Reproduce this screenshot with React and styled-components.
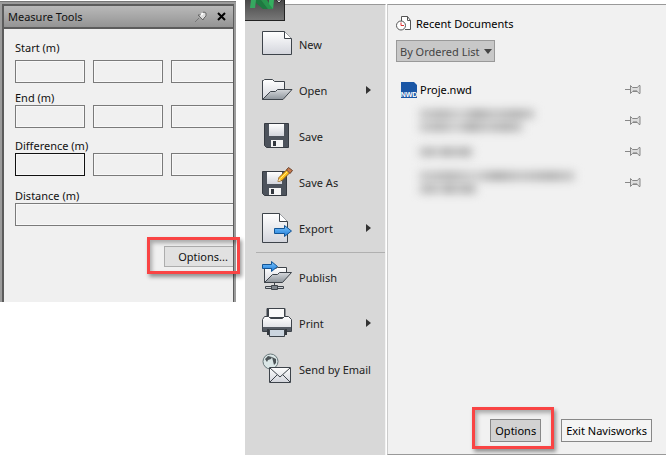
import React from "react";
import styled, { createGlobalStyle, css } from "styled-components";

const GlobalStyle = createGlobalStyle`
  * {
    box-sizing: border-box;
  }
  body {
    margin: 0;
    background: #fff;
    color: #111;
    font-family: "Noto Sans", "Open Sans", sans-serif;
    font-size: 11px;
  }
  button, input, select {
    font: inherit;
    color: inherit;
    border-radius: 0;
    margin: 0;
  }
`;

const Page = styled.main`
  display: grid;
  grid-template-columns: minmax(0, 236fr) minmax(0, 421fr);
  gap: 9px;
  align-items: start;
`;

/* Measure tools */

const ToolWindow = styled.section`
  position: relative;
  margin-top: 1px;
  padding: 2px 2px 0;
  background: #9c9c9c;
  border-top: 1px solid #777;
`;

const ToolFrame = styled.div`
  border: 2px solid #5c5c5c;
  border-right-width: 1px;
  border-bottom: 0;
  background: #f0f0f0;
`;

const TitleBar = styled.header`
  display: flex;
  align-items: center;
  height: 23px;
  padding: 0 7px 0 4px;
  border-bottom: 2px solid #5c5c5c;
  background: linear-gradient(#b9b9b9, #949494);
`;

const Title = styled.h1`
  flex: 1;
  margin: 0;
  font-size: 11px;
  font-weight: normal;
`;

const IconButton = styled.button`
  display: flex;
  align-items: center;
  justify-content: center;
  padding: 0;
  border: 0;
  background: none;
`;

const TitleButtons = styled.div`
  display: flex;
  gap: 10px;
`;

const Form = styled.form`
  display: flex;
  flex-direction: column;
  padding: 11px 0 35px 11px;
  overflow: hidden;
`;

const Group = styled.fieldset`
  min-width: 0;
  margin: 0 0 ${(props) => props.$after}px;
  padding: 0;
  border: 0;
`;

const Legend = styled.legend`
  height: ${(props) => (props.$roomy ? 20 : 15)}px;
  padding: 0;
  line-height: 15px;
`;

const Fields = styled.div`
  display: flex;
  gap: 8px;
  overflow: hidden;
`;

const Field = styled.input`
  flex: 0 0 ${(props) => (props.$wide ? "110%" : "70px")};
  width: 0;
  height: 23px;
  border: 1px solid ${(props) => (props.$active ? "#111" : "#7a7a7a")};
  background: #f0f0f0;
  box-shadow: inset 0 0 0 1px #f8f8f8;
`;

const FormOptions = styled.button`
  align-self: flex-end;
  width: 69px;
  height: 21px;
  padding: 0 0 0 8px;
  border: 1px solid #adadad;
  border-right: 0;
  background: #e1e1e1;
`;

const Highlight = styled.div`
  position: absolute;
  border: 3px solid #f94444;
  box-shadow: 2px 3px 4px rgba(0, 0, 0, 0.4),
    inset 2px 3px 4px rgba(0, 0, 0, 0.3);
  pointer-events: none;
  ${(props) =>
    props.$for === "form"
      ? css`
          right: -4px;
          bottom: 28px;
          width: 93px;
          height: 37px;
        `
      : css`
          inset: -12px -13px -7px -18px;
        `}
`;

/* Application menu */

const AppMenu = styled.section`
  position: relative;
  display: grid;
  grid-template-columns: 141px minmax(0, 1fr);
  min-height: 100vh;
  padding-top: 4px;
`;

const AppButton = styled.button`
  position: absolute;
  top: 0;
  left: 0;
  width: 40px;
  height: 21px;
  padding: 0;
  border: 1px solid #222;
  border-width: 0 1px 1px 0;
  background: linear-gradient(#484848, #777);
  line-height: 0;
`;

const Sidebar = styled.nav`
  padding: 16px 0;
  border-top: 1px solid #999;
  border-right: 1px solid #f4f4f4;
  background: #d8d8d8;
`;

const MenuItem = styled.button`
  display: flex;
  align-items: center;
  width: 100%;
  height: 46px;
  padding: 0 14px 0 16px;
  border: 0;
  background: none;
  text-align: left;
  color: #222;

  span {
    flex: 1;
    margin-left: 6px;
    white-space: nowrap;
  }
`;

const Separator = styled.hr`
  height: 1px;
  margin: 1px 0 1px 11px;
  border: 0;
  background: #b0b0b0;
`;

const Recent = styled.div`
  display: flex;
  flex-direction: column;
  margin-left: 1px;
  border: 1px solid #999;
  border-right: 0;
  border-left-color: #ccc;
  background: #f1f1f1;
`;

const RecentTitle = styled.h2`
  display: flex;
  align-items: center;
  gap: 4px;
  height: 16px;
  margin: 10px 0 9px 8px;
  font-size: 11px;
  font-weight: normal;
  color: #000;
`;

const SortBox = styled.div`
  position: relative;
  width: 99px;
  height: 22px;
  margin-left: 8px;

  svg {
    position: absolute;
    top: 9px;
    right: 3px;
    pointer-events: none;
  }
`;

const Sort = styled.select`
  appearance: none;
  width: 100%;
  height: 100%;
  padding: 0 3px;
  border: 1px solid #999;
  background: #c8c8c8;
  color: #444;
`;

const FileList = styled.ul`
  margin: 12px 25px 0 13px;
  padding: 0;
  list-style: none;
`;

const FileRow = styled.li`
  display: flex;
  align-items: center;
  justify-content: space-between;
  height: 31px;
`;

const FileLink = styled.a`
  display: flex;
  align-items: center;
  gap: 3px;
  color: #000;
  text-decoration: none;
`;

const Hidden = styled.div`
  display: flex;
  flex-direction: column;
  gap: 3px;
  margin-left: 18px;
  filter: blur(4px);
`;

const Smear = styled.i`
  width: ${(props) => props.$width}px;
  height: 10px;
  background: linear-gradient(
    90deg,
    #ccc,
    #b4b4b4 20%,
    #d0d0d0 36%,
    #aaa 50%,
    #c4c4c4 65%,
    #b0b0b0 85%,
    #ccc
  );
`;

const Footer = styled.footer`
  display: flex;
  justify-content: flex-end;
  gap: 20px;
  margin: auto 14px 12px 0;
`;

const OptionsWrap = styled.div`
  position: relative;
`;

const FooterButton = styled.button`
  height: 23px;
  padding: 0 4px;
  border: 1px solid #888;
  background: ${(props) => (props.$pressed ? "#d2d2d2" : "#f4f4f4")};
  color: #000;
  white-space: nowrap;
`;

const HiddenSvg = styled.svg`
  position: absolute;
`;

const line = "#3d434a";

function Gradients() {
  return (
    <HiddenSvg width="0" height="0">
      <defs>
        <linearGradient id="paper" x1="0" y1="0" x2="0" y2="1">
          <stop offset="0" stopColor="#fff" />
          <stop offset="1" stopColor="#d3d5dc" />
        </linearGradient>
        <linearGradient id="flap" x1="0" y1="0" x2="0" y2="1">
          <stop offset="0" stopColor="#d5d8dc" />
          <stop offset="1" stopColor="#8e959c" />
        </linearGradient>
        <linearGradient id="arrow" x1="0" y1="0" x2="0" y2="1">
          <stop offset="0" stopColor="#7cc8ff" />
          <stop offset="1" stopColor="#1b78d8" />
        </linearGradient>
      </defs>
    </HiddenSvg>
  );
}

const Icon = ({ children }) => (
  <svg width="32" height="32" viewBox="0 0 32 32" aria-hidden="true">
    {children}
  </svg>
);

const NewIcon = () => (
  <Icon>
    <path d="M1.5 3.5h22l7 7v16h-29z" fill="url(#paper)" stroke={line} />
    <path d="M23.5 3.5v7h7" fill="#fff" stroke={line} />
  </Icon>
);

const OpenIcon = () => (
  <Icon>
    <path
      d="M1.5 25.5v-19h1l1-1h8l2 2h10v9l-10 9z"
      fill="url(#paper)"
      stroke={line}
    />
    <path
      d="M1.5 25.5l8-8h5l2-2h14.5l-9 10z"
      fill="url(#flap)"
      stroke={line}
    />
  </Icon>
);

const Disk = () => (
  <>
    <path d="M.5 4.5h24v24h-22l-2-2z" fill="#4d535c" stroke="#363b42" />
    <path d="M5 5h15v12H5z" fill="url(#paper)" />
    <path d="M7 21h12v7H7z" fill="#f5f5f5" />
    <path d="M9 22h3v5H9z" fill="#33383f" />
  </>
);

const SaveIcon = () => (
  <Icon>
    <g transform="translate(3 -1)">
      <Disk />
    </g>
  </Icon>
);

const SaveAsIcon = () => (
  <Icon>
    <g transform="translate(1 1)">
      <Disk />
    </g>
    <path d="M17 15.5l1-4L27 2.5l3 3-9 9z" fill="#ffc21c" stroke="#8a5a20" />
    <path d="M19.5 12.500l8-8" stroke="#ffea80" />
    <path d="M25.5 4l2-2.500 4 3-2.500 3z" fill="#c77a4e" stroke="#6b4530" />
    <path d="M17 15.5l1-3 2 2z" fill="#f7e1b5" />
  </Icon>
);

const ExportIcon = () => (
  <Icon>
    <path d="M1.5 1.5h17l8 8v21h-25z" fill="url(#paper)" stroke={line} />
    <path d="M18.5 1.5v8h8" fill="#fff" stroke={line} />
    <path
      d="M13.5 16.5h10v-3l7 5.5-7 5.500v-3h-10z"
      fill="url(#arrow)"
      stroke="#145596"
    />
  </Icon>
);

const PublishIcon = () => (
  <Icon>
    <path d="M3.5 21.5v-14h11l2-1h9v8l-8 7z" fill="url(#paper)" stroke={line} />
    <path d="M3.5 21.5l8-8h5l2-2h12l-9 10z" fill="url(#flap)" stroke={line} />
    <path
      d="M1.5 3.5h9v-3l6 5-6 5v-3h-9z"
      fill="url(#arrow)"
      stroke="#145596"
    />
    <path d="M13.5 21v3" stroke={line} />
    <path d="M4.5 25.5h7v2h-7zM15.5 25.5h7v2h-7z" fill="#cdd1d5" stroke={line} />
    <path d="M10.5 24.5h6v4h-6z" fill="#7d848b" stroke={line} />
  </Icon>
);

const PrintIcon = () => (
  <Icon>
    <path d="M6 10V1.5h18V10" fill="#3d434a" stroke={line} />
    <path d="M7.5 10.5v-9h16v9z" fill="#fafafa" stroke={line} />
    <path
      d="M1.5 12.5l2-3h4l2 2h12l2-2h4l3 3v12h-29z"
      fill="url(#paper)"
      stroke={line}
    />
    <path d="M2 20h28v4H2z" fill="#545a63" />
    <path d="M6 22h20v6H6z" fill="#33383e" />
    <path d="M8.5 22.5h15v7h-15z" fill="#cbd5df" stroke={line} />
  </Icon>
);

const EmailIcon = () => (
  <Icon>
    <circle cx="9.5" cy="8.5" r="7.5" fill="#dae6e6" stroke="#68777a" />
    <path
      d="M4 6l3-3 4 1-1 2-3 1-1 2zM11 4l4 2v4l-2 2-1-4z"
      fill="#4b5356"
    />
    <path d="M8.5 14.5h21v15h-21z" fill="url(#paper)" stroke={line} />
    <path d="M9 15l10 9 10-9M9 29l7-7M29 29l-7-7" fill="none" stroke={line} />
  </Icon>
);

const PinIcon = () => (
  <svg width="16" height="11" viewBox="0 0 16 11" aria-hidden="true">
    <path d="M0 5.5h5" stroke="#888" />
    <path
      d="M5.5 1.5l2 2h5l1.5-2h1v8h-1l-1.5-2h-5l-2 2z"
      fill="#ddd"
      stroke="#888"
    />
    <path d="M8 6.5h4" stroke="#aaa" />
  </svg>
);

const Arrow = () => (
  <svg width="5" height="8" viewBox="0 0 5 8" aria-hidden="true">
    <path d="M0 0l5 4-5 4z" fill="#333" />
  </svg>
);

const groups = [
  { label: "Start (m)", after: 7, roomy: true },
  { label: "End (m)", after: 10 },
  { label: "Difference (m)", after: 12, active: true },
];

const items = [
  { label: "New", icon: NewIcon },
  { label: "Open", icon: OpenIcon, more: true },
  { label: "Save", icon: SaveIcon },
  { label: "Save As", icon: SaveAsIcon },
  { label: "Export", icon: ExportIcon, more: true },
  { label: "Publish", icon: PublishIcon, divided: true },
  { label: "Print", icon: PrintIcon, more: true },
  { label: "Send by Email", icon: EmailIcon },
];

const hiddenFiles = [[116, 104], [54], [156, 58]];

function MeasureTools() {
  return (
    <ToolWindow>
      <ToolFrame>
        <TitleBar>
          <Title>Measure Tools</Title>
          <TitleButtons>
            <IconButton aria-label="Auto hide">
              <svg width="12" height="12" viewBox="0 0 12 12">
                <path d="M0 11l4-4" stroke="#777" />
                <path
                  d="M3 4l5 5 1-2 2-2V2L9 1 7 2 5 4z"
                  fill="#ddd"
                  stroke="#666"
                />
                <path d="M6 4l2-2" stroke="#fff" strokeWidth="2" />
              </svg>
            </IconButton>
            <IconButton aria-label="Close">
              <svg width="9" height="9" viewBox="0 0 9 9">
                <path d="M1 1l7 7M8 1L1 8" stroke="#000" strokeWidth="2" />
              </svg>
            </IconButton>
          </TitleButtons>
        </TitleBar>
        <Form onSubmit={(e) => e.preventDefault()}>
          {groups.map((group) => (
            <Group key={group.label} $after={group.after}>
              <Legend $roomy={group.roomy}>{group.label}</Legend>
              <Fields>
                {["X", "Y", "Z"].map((axis) => (
                  <Field
                    key={axis}
                    aria-label={`${group.label} ${axis}`}
                    $active={group.active && axis === "X"}
                    readOnly
                  />
                ))}
              </Fields>
            </Group>
          ))}
          <Group $after={20}>
            <Legend>Distance (m)</Legend>
            <Fields>
              <Field aria-label="Distance (m)" $wide readOnly />
            </Fields>
          </Group>
          <FormOptions type="button">Options...</FormOptions>
        </Form>
      </ToolFrame>
      <Highlight $for="form" />
    </ToolWindow>
  );
}

function ApplicationMenu() {
  return (
    <AppMenu>
      <Sidebar>
        {items.map(({ label, icon: ItemIcon, more, divided }) => (
          <React.Fragment key={label}>
            {divided && <Separator />}
            <MenuItem>
              <ItemIcon />
              <span>{label}</span>
              {more && <Arrow />}
            </MenuItem>
          </React.Fragment>
        ))}
      </Sidebar>
      <Recent>
        <RecentTitle>
          <svg width="16" height="16" viewBox="0 0 16 16" aria-hidden="true">
            <path d="M5.5 6V1.5h6l3 4v9H9" fill="#fff" stroke="#555" />
            <path d="M11.5 1.5v4h3" fill="none" stroke="#555" />
            <circle cx="5" cy="10.5" r="4.5" fill="#fff" stroke="#555" />
            <path d="M5 7.5v3h3" fill="none" stroke="#d33" />
          </svg>
          Recent Documents
        </RecentTitle>
        <SortBox>
          <Sort aria-label="Sort documents">
            <option>By Ordered List</option>
          </Sort>
          <svg width="8" height="5" viewBox="0 0 8 5">
            <path d="M0 0h8L4 5z" fill="#444" />
          </svg>
        </SortBox>
        <FileList>
          <FileRow>
            <FileLink href="#proje">
              <svg width="16" height="16" viewBox="0 0 16 16" aria-hidden="true">
                <path d="M0 0h13l3 3v13H0z" fill="#1a56a5" />
                <text
                  x="8"
                  y="15"
                  fill="#fff"
                  fontFamily="Liberation Sans"
                  fontSize="7"
                  fontWeight="bold"
                  textAnchor="middle"
                >
                  NWD
                </text>
              </svg>
              Proje.nwd
            </FileLink>
            <IconButton aria-label="Pin">
              <PinIcon />
            </IconButton>
          </FileRow>
          {hiddenFiles.map((widths, i) => (
            <FileRow key={i}>
              <Hidden>
                {widths.map((width) => (
                  <Smear key={width} $width={width} />
                ))}
              </Hidden>
              <IconButton aria-label="Pin">
                <PinIcon />
              </IconButton>
            </FileRow>
          ))}
        </FileList>
        <Footer>
          <OptionsWrap>
            <FooterButton $pressed>Options</FooterButton>
            <Highlight />
          </OptionsWrap>
          <FooterButton>Exit Navisworks</FooterButton>
        </Footer>
      </Recent>
      <AppButton aria-label="Application menu">
        <svg width="39" height="20" viewBox="0 0 39 20">
          <path d="M6 0h5l-1 8H5z" fill="#35a860" />
          <path d="M11 0h5l7 9h-5L11 3z" fill="#1d7a40" />
          <path d="M16 0h6l6 9h-5z" fill="#27954d" />
          <path d="M24 0h5l-1 9-4-5z" fill="#35b060" />
          <path d="M31 0h6l-3 3z" fill="#ddd" stroke="#333" />
        </svg>
      </AppButton>
    </AppMenu>
  );
}

function App() {
  return (
    <>
      <GlobalStyle />
      <Gradients />
      <Page>
        <MeasureTools />
        <ApplicationMenu />
      </Page>
    </>
  );
}

export default App;
